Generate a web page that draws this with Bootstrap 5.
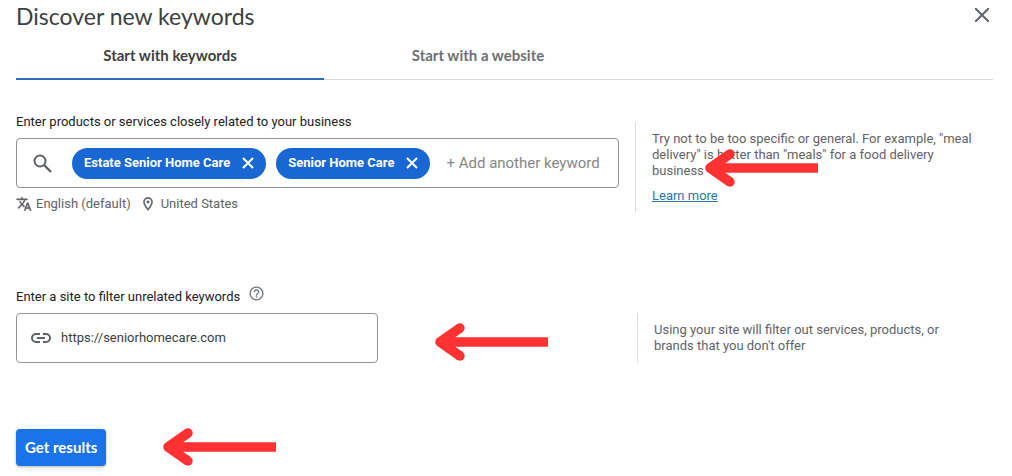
<!DOCTYPE html>
<html lang="en">
<head>
<meta charset="utf-8">
<meta name="viewport" content="width=device-width, initial-scale=1">
<title>Discover new keywords</title>
<link href="https://cdn.jsdelivr.net/npm/bootstrap@5.3.0/dist/css/bootstrap.min.css" rel="stylesheet">
<style>
  body { font-family: Roboto, "Liberation Sans", sans-serif; font-size: 13px; line-height: 16px; color: #202124; background: #fff; }
  .planner { padding: 0 19px 8px 16px; }
  .planner svg { display: block; flex: none; }
  .display-face { font-family: Lato, Roboto, sans-serif; }
  .page-title { font-size: 23px; line-height: 32px; font-weight: 400; color: #3c4043; }
  .icon-btn { border: 0; background: none; padding: 0; color: inherit; }
  .mode-tabs { border-bottom: 1px solid #dadce0; }
  .mode-tabs .nav-link { width: 308px; height: 48px; padding: 0; border: 0; border-bottom: 2px solid transparent; border-radius: 0; background: none; color: #6c7075; font-size: 15px; font-weight: 700; margin-bottom: -1px; }
  .mode-tabs .nav-link.active { color: #3c4043; border-color: #2f6dba; }
  .hint { flex: 0 0 358px; border-left: 1px solid #dadce0; padding: 9px 16px 0; color: #5f6368; }
  .hint p { margin-bottom: 9px; }
  .hint-site { flex-basis: 356px; }
  .field-box { height: 50px; border: 1px solid #919396; border-radius: 4px; color: #5f6368; }
  .field-box input { border: 0; outline: 0; background: none; min-width: 0; padding: 0; color: #3c4043; }
  .field-box .add-keyword { font-size: 15px; }
  .field-box input::placeholder { color: #85888b; opacity: 1; }
  .chip { height: 31px; border-radius: 16px; background: #1967d2; color: #fff; font-weight: 700; padding: 0 8px 0 12px; }
  .chips { gap: 10px; }
  .targeting { color: #5f6368; }
  .site-box { width: 362px; }
  .site-row { gap: 57px; }
  .link-blue { color: #2a77a8; }
  .submit { background: #1a73e8; color: #fff; height: 37px; padding: 0 8px; border-radius: 4px; font-size: 15px; font-weight: 700; box-shadow: 0 1px 3px rgba(60,64,67,.4); }
  .submit:hover { background: #1765cc; color: #fff; }
  .pointer-over { left: 69px; top: 26px; }
  .keywords-part { margin-top: 34px; }
  .site-part { margin-top: 73px; }
  .submit-part { margin-top: 64px; }
</style>
</head>
<body>
<svg width="0" height="0" class="position-absolute" aria-hidden="true">
  <symbol id="arrow" viewBox="0 0 113 40"><path d="M113 20H8M25 6L5 20L25 34" fill="none" stroke="#ff3131" stroke-width="9.5" stroke-linejoin="round"/><circle cx="25" cy="6" r="4.7" fill="#ff3131"/><circle cx="25" cy="34" r="4.7" fill="#ff3131"/></symbol>
  <symbol id="cross" viewBox="0 0 12 12"><path d="M1 1L11 11M11 1L1 11" fill="none" stroke="currentColor" stroke-width="2"/></symbol>
  <symbol id="thin-cross" viewBox="0 0 14 14"><path d="M0 0L14 14M14 0L0 14" fill="none" stroke="currentColor" stroke-width="2"/></symbol>
</svg>
<main class="planner">
  <header class="d-flex justify-content-between align-items-start">
    <h1 class="page-title display-face m-0">Discover new keywords</h1>
    <button class="icon-btn mt-2 me-1" type="button" aria-label="Close"><svg width="14" height="14" color="#5f6368"><use href="#thin-cross"/></svg></button>
  </header>
  <ul class="nav mode-tabs display-face flex-nowrap">
    <li><button class="nav-link active" type="button" aria-current="page">Start with keywords</button></li>
    <li><button class="nav-link" type="button">Start with a website</button></li>
  </ul>

  <form>
    <section class="keywords-part d-flex">
      <div class="flex-fill me-3">
        <label for="keyword" class="d-block mb-2">Enter products or services closely related to your business</label>
        <div class="field-box d-flex align-items-center">
          <svg class="mx-3" width="19" height="19" viewBox="0 0 19 19" fill="none" stroke="currentColor" stroke-width="2"><circle cx="7" cy="7" r="5.500"/><path d="M11 11L18 18" stroke-width="2.400"/></svg>
          <div class="chips d-flex flex-shrink-0 ms-1 me-3">
            <div class="chip d-flex align-items-center">Estate Senior Home Care<button type="button" class="icon-btn ms-2 px-1" aria-label="Remove Estate Senior Home Care"><svg width="12" height="12"><use href="#cross"/></svg></button></div>
            <div class="chip d-flex align-items-center">Senior Home Care<button type="button" class="icon-btn ms-2 px-1" aria-label="Remove Senior Home Care"><svg width="12" height="12"><use href="#cross"/></svg></button></div>
          </div>
          <input id="keyword" class="add-keyword flex-fill" type="text" placeholder="+ Add another keyword">
        </div>
        <div class="targeting d-flex align-items-center mt-2">
          <svg class="me-1" width="16" height="16" viewBox="0 0 24 24" fill="currentColor" stroke="currentColor" stroke-width=".6"><path d="M12.87 15.07l-2.54-2.51.03-.03A17.5 17.5 0 0 0 14.07 6H17V4h-7V2H8v2H1v2h11.17C11.5 7.92 10.44 9.75 9 11.35 8.07 10.32 7.3 9.19 6.69 8h-2c.73 1.63 1.73 3.17 2.98 4.56l-5.09 5.02L4 19l5-5 3.11 3.11.76-2.04zM18.5 10h-2L12 22h2l1.12-3h4.75L21 22h2l-4.5-12zm-2.62 7l1.62-4.33L19.12 17h-3.24z"/></svg>
          <span>English (default)</span>
          <svg class="ms-2 me-1" width="18" height="16" viewBox="0 0 24 24" fill="currentColor"><path d="M12 2C8.100 2 5 5.100 5 9c0 5.250 7 13 7 13s7-7.750 7-13c0-3.900-3.100-7-7-7zM7 9a5 5 0 0 1 10 0c0 2.900-2.900 7.200-5 9.900C9.900 16.200 7 11.800 7 9z" stroke="currentColor" stroke-width=".4"/><circle cx="12" cy="9" r="2.200"/></svg>
          <span>United States</span>
        </div>
      </div>
      <aside class="hint position-relative mt-2">
        <p>Try not to be too specific or general. For example, "meal delivery" is better than "meals" for a food delivery business</p>
        <a class="link-blue" href="#">Learn more</a>
        <svg class="pointer-over position-absolute" width="113" height="40"><use href="#arrow"/></svg>
      </aside>
    </section>

    <section class="site-part">
      <div class="d-flex align-items-start mb-2">
        <label for="site" class="pt-1">Enter a site to filter unrelated keywords</label>
        <button type="button" class="icon-btn ms-2" aria-label="Help"><svg width="17" height="17" viewBox="0 0 24 24" fill="#777a7e"><path d="M11 18h2v-2h-2v2zm1-16a10 10 0 1 0 0 20 10 10 0 0 0 0-20zm0 18a8 8 0 1 1 0-16 8 8 0 0 1 0 16zm0-14a4 4 0 0 0-4 4h2a2 2 0 1 1 4 0c0 2-3 1.750-3 5h2c0-2.250 3-2.500 3-5a4 4 0 0 0-4-4z"/></svg></button>
      </div>
      <div class="d-flex justify-content-between">
        <div class="site-row d-flex align-items-center">
          <div class="field-box site-box d-flex align-items-center">
            <svg class="mx-2 ps-1" width="28" height="12" viewBox="0 0 20 12" fill="none" stroke="currentColor" stroke-width="2"><path d="M9 2H5a4 4 0 0 0 0 8H9M12 2H15a4 4 0 0 1 0 8H12M6 6H14"/></svg>
            <input id="site" class="flex-fill" type="url" value="https://seniorhomecare.com">
          </div>
          <svg class="mt-2" width="113" height="40"><use href="#arrow"/></svg>
        </div>
        <aside class="hint hint-site">Using your site will filter out services, products, or<br>brands that you don't offer</aside>
      </div>
    </section>

    <div class="submit-part site-row d-flex align-items-center">
      <button class="btn submit display-face" type="button">Get results</button>
      <svg width="113" height="40"><use href="#arrow"/></svg>
    </div>
  </form>
</main>
<script src="https://cdn.jsdelivr.net/npm/bootstrap@5.3.0/dist/js/bootstrap.bundle.min.js"></script>
</body>
</html>
